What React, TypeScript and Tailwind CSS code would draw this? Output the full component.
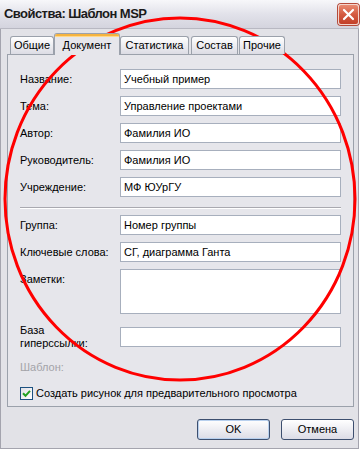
import React from "react";

const F = "font-['Liberation_Sans',Arial,sans-serif]";

function Input({ value, h = "h-[20px]" }: { value?: string; h?: string }) {
  return (
    <div
      className={`w-[221px] ${h} border border-[#a7afbd] bg-white pl-[3px] flex items-center text-[11px] text-black leading-none`}
    >
      {value}
    </div>
  );
}

function Row({ label, value, className = "" }: { label: string; value?: string; className?: string }) {
  return (
    <div className={`flex items-center ${className}`}>
      <div className="w-[100px] text-[11px] text-black leading-[13px]">{label}</div>
      <Input value={value} />
    </div>
  );
}

function Tab({ label, w, className = "" }: { label: string; w: string; className?: string }) {
  return (
    <div
      className={`${w} h-[18px] rounded-t-[3px] border border-b-0 border-[#9ba1ab] bg-gradient-to-b from-white to-[#dcdce4] flex items-center justify-center text-[11px] text-black ${className}`}
    >
      {label}
    </div>
  );
}

export default function App() {
  return (
    <div className={`relative w-[363px] h-[449px] bg-white overflow-hidden ${F}`}>
      <div className="w-[359px] h-[449px] border-x border-b border-[#a4a4ae] bg-[#e2e2e7] flex flex-col">
        {/* Title bar */}
        <div className="h-[29px] flex items-center justify-between bg-gradient-to-b from-[#f7f7fa] via-[#e2e2ea] to-[#d4d4de] border-b border-[#b8b8c2] -mx-px">
          <div className="pl-[4px] text-[13px] font-bold text-[#1a1a1a] tracking-[-0.55px]">Свойства: Шаблон MSP</div>
          <div className="w-[21px] h-[21px] rounded-[3px] border border-[#f4d4cc] bg-gradient-to-b from-[#e88a72] via-[#d45a40] to-[#c2402a] flex items-center justify-center shadow-[0_0_0_1px_#b44a3a]">
            <svg width="13" height="13" viewBox="0 0 13 13">
              <path d="M2 2 L11 11 M11 2 L2 11" stroke="white" strokeWidth="2.2" strokeLinecap="round" />
            </svg>
          </div>
        </div>

        {/* Body */}
        <div className="pl-[6px] pt-[4px] flex flex-col">
          {/* Tabs */}
          <div className="relative z-10 h-[22px] flex items-end pl-[3px] -mb-px">
            <Tab label="Общие" w="w-[44px]" className="mb-px" />
            <div className="w-[66px] h-[22px] rounded-t-[3px] border border-b-0 border-[#9ba1ab] bg-[#e6e6eb] flex flex-col text-[11px] text-black overflow-hidden">
              <div className="h-[3px] bg-[#f5b33f] border-b border-[#ffd889]" />
              <div className="flex-1 flex items-center justify-center pb-[1px]">Документ</div>
            </div>
            <Tab label="Статистика" w="w-[69px]" className="mb-px" />
            <Tab label="Состав" w="w-[47px]" className="mb-px ml-[2px]" />
            <Tab label="Прочие" w="w-[46px]" className="mb-px ml-[1px]" />
          </div>

          {/* Panel */}
          <div className="w-[347px] h-[353px] border border-[#9ba1ab] bg-[#e6e6eb] pl-[12px] pt-[14px] flex flex-col">
            <Row label="Название:" value="Учебный пример" />
            <Row label="Тема:" value="Управление проектами" className="mt-[7px]" />
            <Row label="Автор:" value="Фамилия ИО" className="mt-[7px]" />
            <Row label="Руководитель:" value="Фамилия ИО" className="mt-[7px]" />
            <Row label="Учреждение:" value="МФ ЮУрГУ" className="mt-[7px]" />
            <div className="mt-[10px] w-[321px] h-[2px] border-t border-[#a9a9b0] border-b border-b-white" />
            <Row label="Группа:" value="Номер группы" className="mt-[6px]" />
            <Row label="Ключевые слова:" value="СГ, диаграмма Ганта" className="mt-[7px]" />
            <div className="flex items-start mt-[7px]">
              <div className="w-[100px] text-[11px] text-black leading-[13px] pt-[4px]">Заметки:</div>
              <Input h="h-[45px]" />
            </div>
            <div className="flex items-center mt-[10px]">
              <div className="w-[100px] text-[11px] text-black leading-[13px]">
                База
                <br />
                гиперссылки:
              </div>
              <Input />
            </div>
            <div className="mt-[11px] text-[11px] leading-[13px] text-[#a3a3a8]">Шаблон:</div>
            <div className="mt-[13px] flex items-center">
              <div className="w-[13px] h-[13px] border border-[#1c5180] bg-gradient-to-br from-[#e0e0e6] to-white flex items-center justify-center">
                <svg width="9" height="9" viewBox="0 0 9 9">
                  <path d="M1 4.2 L3.5 6.8 L8 1.8" stroke="#21a121" strokeWidth="2" fill="none" />
                </svg>
              </div>
              <div className="ml-[3px] text-[11px] leading-[13px] text-black">
                Создать рисунок для предварительного просмотра
              </div>
            </div>
          </div>

          {/* Buttons */}
          <div className="w-[347px] mt-[12px] flex justify-end gap-[11px]">
            <div className="w-[73px] h-[21px] rounded-[3px] border border-[#3d4f6f] bg-gradient-to-b from-white to-[#dcdce6] shadow-[inset_0_0_0_1px_#b8d0ee] flex items-center justify-center text-[11px] text-black">
              OK
            </div>
            <div className="w-[73px] h-[21px] rounded-[3px] border border-[#3d4f6f] bg-gradient-to-b from-white to-[#dcdce6] flex items-center justify-center text-[11px] text-black">
              Отмена
            </div>
          </div>
        </div>
      </div>

      {/* Red annotation ellipse */}
      <svg className="absolute inset-0 pointer-events-none" width="363" height="449" viewBox="0 0 363 449">
        <ellipse cx="180" cy="199" rx="175" ry="181" fill="none" stroke="#ff0000" strokeWidth="3" />
      </svg>
    </div>
  );
}
